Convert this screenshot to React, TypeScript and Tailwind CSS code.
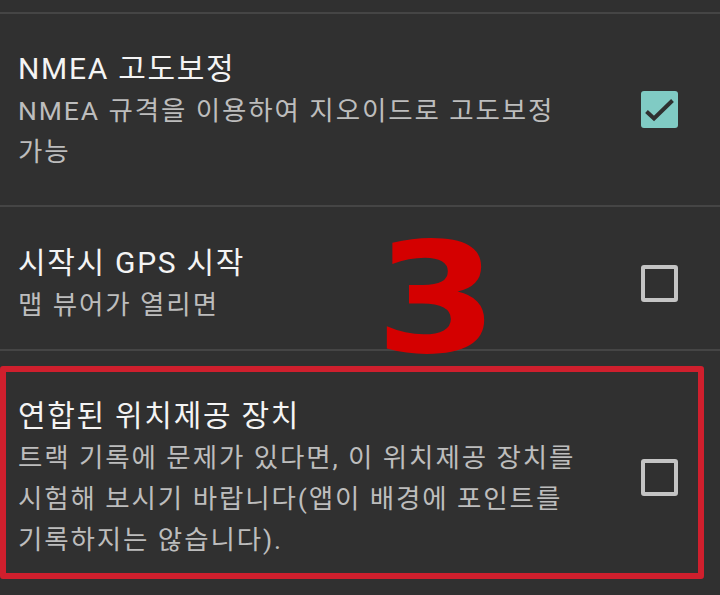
import React from 'react';

type Pref = {
  title: string;
  summary: string;
  checked: boolean;
  rowClass: string;
};

const prefs: Pref[] = [
  {
    title: 'NMEA 고도보정',
    summary: 'NMEA 규격을 이용하여 지오이드로 고도보정 가능',
    checked: true,
    rowClass: 'h-[191px]',
  },
  {
    title: '시작시 GPS 시작',
    summary: '맵 뷰어가 열리면',
    checked: false,
    rowClass: 'h-[142px] pt-[10px]',
  },
  {
    title: '연합된 위치제공 장치',
    summary: '트랙 기록에 문제가 있다면, 이 위치제공 장치를 시험해 보시기 바랍니다(앱이 배경에 포인트를 기록하지는 않습니다).',
    checked: false,
    rowClass: 'h-[252px]',
  },
];

const CheckBox = ({ checked }: { checked: boolean }) => {
  if (checked) {
    return (
      <svg width="37" height="37" viewBox="0 0 37 37">
        <rect x="0" y="0" width="37" height="37" rx="3" fill="#80cbc4" />
        <path d="M5.5 20.5 L13 27.5 L31.5 9.5" fill="none" stroke="#2f3030" strokeWidth="4" />
      </svg>
    );
  }
  return <div className="w-[37px] h-[37px] rounded-[3px] border-[4px] border-[#c4c4c4]" />;
};

const App = () => {
  return (
    <main
      className="relative w-[720px] h-[595px] overflow-hidden bg-[#303030]"
      style={{ fontFamily: 'Roboto, "Noto Sans CJK KR", sans-serif' }}
    >
      <div className="h-[12px]" />
      {prefs.map((p) => (
        <section key={p.title} className="border-t-2 border-[#454545]">
          <div className={`${p.rowClass} flex items-center pl-[18px] pr-[42px]`}>
            <div className="flex-1 pr-[30px] break-keep">
              <h3 className="text-[30px] leading-[42px] tracking-[1.7px] text-[#f4f4f4]">{p.title}</h3>
              <p className="text-[26.5px] leading-[41px] tracking-[1.9px] text-[#bdbdbd]">{p.summary}</p>
            </div>
            <CheckBox checked={p.checked} />
          </div>
        </section>
      ))}

      {/* annotation overlays */}
      <div className="absolute left-0 top-[366px] w-[704px] h-[213px] border-[6px] border-[#cf1f2d] rounded-[3px]" />
      <div
        className="absolute left-[375px] top-[222px] text-[154px] leading-none font-bold text-[#d40000] origin-left scale-x-[1.15]"
        style={{ fontFamily: '"DejaVu Sans", sans-serif' }}
      >
        3
      </div>
    </main>
  );
};

export default App;
